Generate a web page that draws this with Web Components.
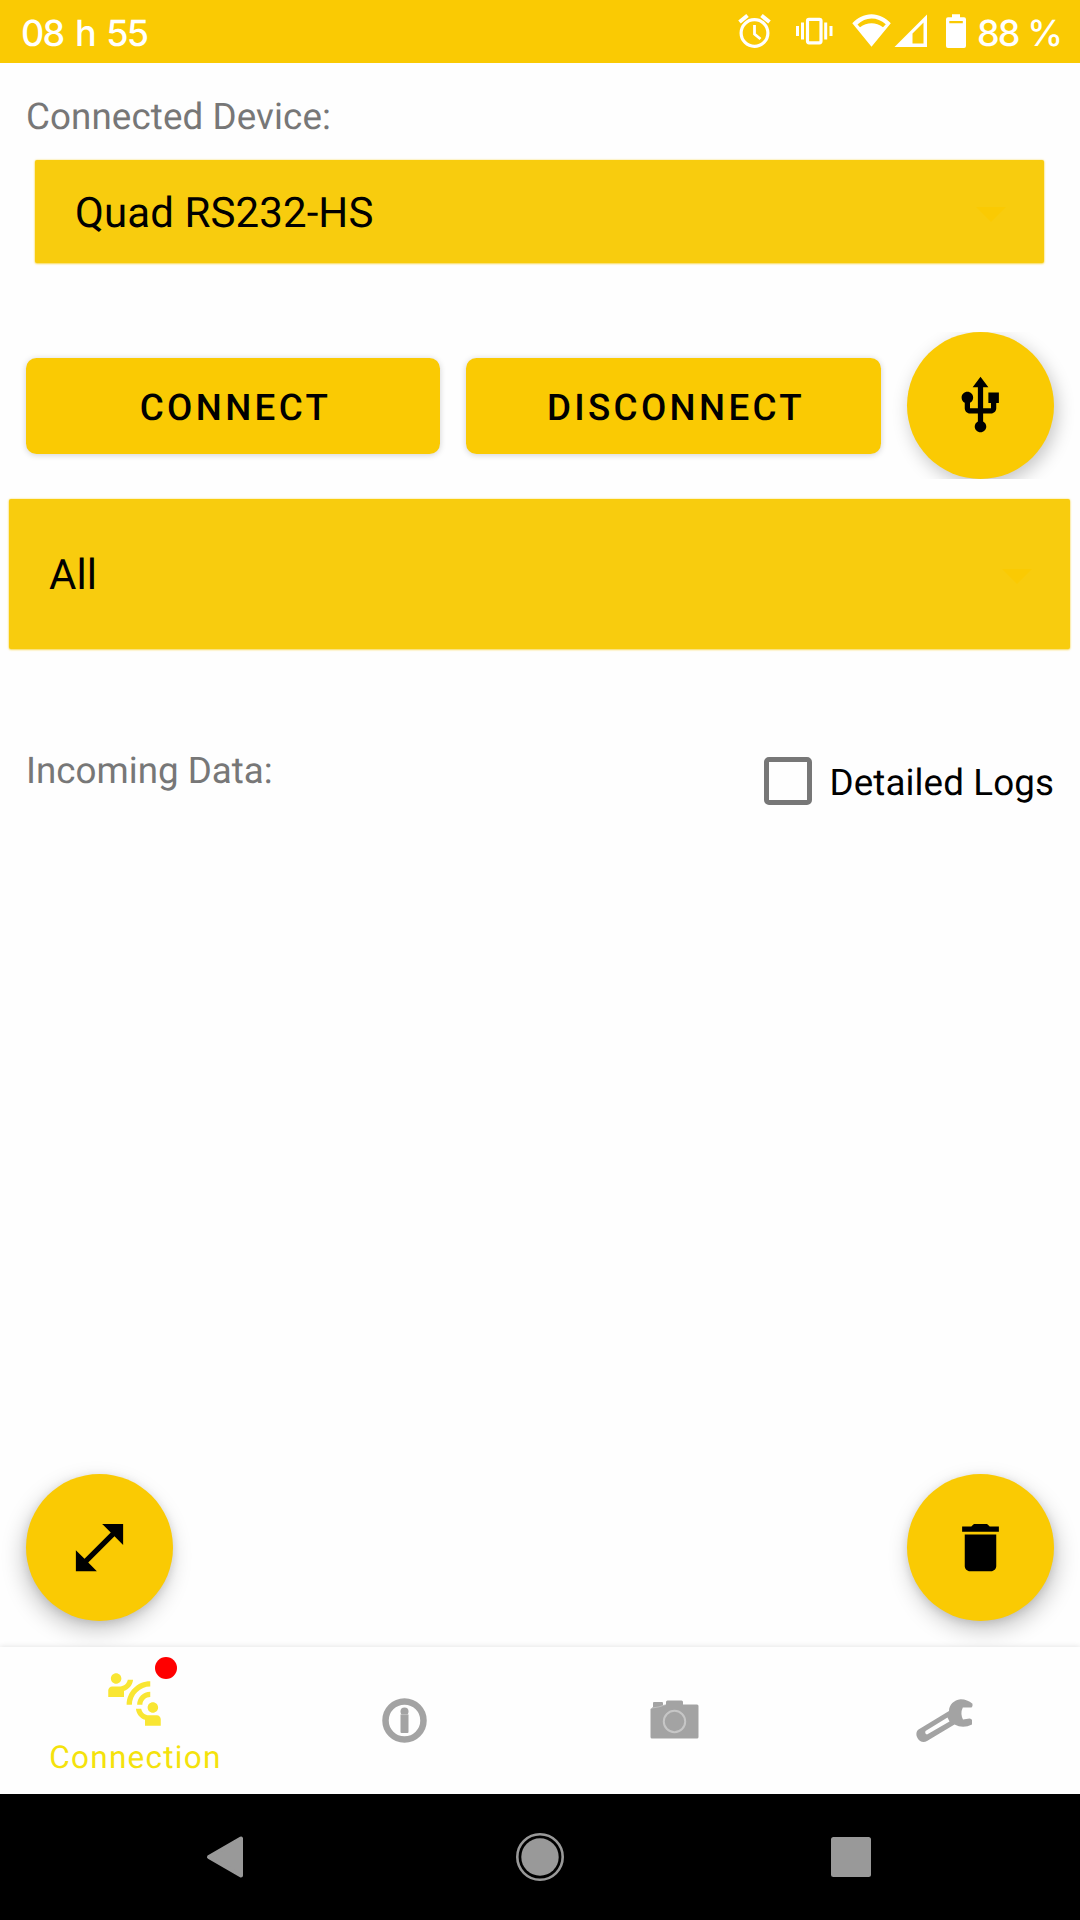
<!DOCTYPE html>
<html lang="en">
<head>
<meta charset="utf-8">
<title>Connection</title>
<style>
html,body{margin:0;padding:0}
body{width:1080px;height:1920px;overflow:hidden;background:#fefefe;font-family:Roboto,"Noto Sans",sans-serif;text-rendering:geometricPrecision;--yellow:#faca03}
</style>
</head>
<body>
<phone-screen></phone-screen>
<script>
const define = (name, html) => {
  const t = document.createElement('template');
  t.innerHTML = html;
  customElements.define(name, class extends HTMLElement {
    constructor() {
      super();
      this.attachShadow({ mode: 'open' }).append(t.content.cloneNode(true));
    }
  });
};

define('status-bar', `
<style>
:host{display:flex;height:63px;box-sizing:border-box;background:var(--yellow);color:#fff;font:550 36px/63px Inter,Roboto,sans-serif;padding:0 22px 0 21px;justify-content:space-between}
.clock{letter-spacing:-1.700px;word-spacing:3.500px;padding-top:2px;height:61px}
.right{display:flex}
svg{display:block;width:240px;height:63px}
.pct{letter-spacing:-1.900px;word-spacing:1px;padding:2px 0 0 2px;height:61px;width:81px;white-space:nowrap}
</style>
<span class="clock">08 h 55</span>
<div class="right">
<svg viewBox="735 0 240 63" fill="none" stroke="#fff">
  <circle cx="754.5" cy="33" r="13.4" stroke-width="3.2"/>
  <path d="M739.5 22l8-6.500M769.500 22l-8-6.500" stroke-width="4"/>
  <path d="M754.500 25v9l6 5" stroke-width="2.800"/>
  <rect x="807.500" y="19.300" width="13.500" height="23.500" rx="1.500" stroke-width="3.200"/>
  <path d="M802.500 22.500v17M825.700 22.500v17M797.500 26v10M831 26v10" stroke-width="3"/>
  <path fill="#fff" stroke="none" fill-rule="evenodd" d="M871.500 46.800L852.300 23.200C857.500 18 864 14.300 871.500 14.300S885.500 18 890.800 23.200ZM857.500 24.500L860 27.300C863.500 24.500 867.500 23.300 871.500 23.300S879.500 24.500 883 27.300L885.800 24.200C881.500 20.500 876.500 18.500 871.500 18.500S861.500 20.500 857.500 24.500Z"/>
  <path fill="#fff" stroke="none" fill-rule="evenodd" d="M894.500 47L927 14.500V47ZM912.500 43.500H923.500V22.500L912.500 33.500Z"/>
  <path fill="#fff" stroke="none" fill-rule="evenodd" d="M952 14.300h8v3h4q2 0 2 2V46q0 2-2 2H948q-2 0-2-2V19.300q0-2 2-2h4ZM949.300 21v2.200h13.500V21Z"/>
</svg>
<span class="pct">88 %</span>
</div>`);

define('select-box', `
<style>
:host{display:flex;box-sizing:border-box;align-items:center;justify-content:space-between;background:#f8cc0e;border-radius:2px;box-shadow:0 0 2px #f8cc0eb0,0 1px 2px #f8cc0e90;color:#000;font-size:42px;letter-spacing:.1px;line-height:50px;padding:4px 38px 0 40px}
svg{display:block;width:30px;height:16px;position:relative;top:1px}
</style>
<slot></slot>
<svg viewBox="0 0 30 16"><path d="M0 0H30L15 15Z" fill="#faca03"/></svg>`);

define('raised-button', `
<style>
:host{display:flex;flex:1;height:96px;align-items:center;justify-content:center;box-sizing:border-box;padding:3px 0 0 5px;background:var(--yellow);border-radius:10.500px;box-shadow:0 1px 6px #0000002e;color:#000;font-weight:500;font-size:36.750px;letter-spacing:3.330px}
</style><slot></slot>`);

define('round-button', `
<style>
:host{display:flex;width:147px;height:147px;flex:none}
:host([clipped]){clip-path:inset(0 -26px 0 -26px)}
div{width:147px;height:147px;border-radius:50%;background:var(--yellow);display:grid;place-items:center;box-shadow:var(--fab-shift,0px) 9px 22px #00000038,0 2px 8px #0000001c}
:host([clipped]) div{box-shadow:3px 6px 18px #0000003a}
svg,::slotted(svg){width:63px;height:63px;display:block}
</style><div><slot></slot></div>`);

define('check-option', `
<style>
:host{display:flex;align-items:center;color:#000;font-size:36.750px;line-height:48px}
i{display:block;box-sizing:border-box;width:48px;height:48px;border:5px solid #777;border-radius:5px;margin-right:18px}
span{position:relative;top:2px;letter-spacing:.1px}
</style><i></i><span><slot></slot></span>`);

define('tab-item', `
<style>
:host{display:flex;flex:1;flex-direction:column;align-items:center;justify-content:center;color:#f4e20c;font-size:31.500px;line-height:37px;letter-spacing:1.250px;padding-right:2px}
::slotted(svg){display:block;width:63px;height:63px}
</style><slot></slot>`);

define('tab-bar', `
<style>
:host{display:flex;height:147px;background:#fefefe;box-shadow:0 -1px 5px #00000018;position:relative}
.first{position:relative;justify-content:flex-start;padding-top:21px}
.label{padding:8px 0 0 3px;display:block}
.dot{position:absolute;left:155px;top:10px;width:22px;height:22px;border-radius:50%;background:#f00}
</style>
<tab-item class="first" style="flex:0 0 270px;box-sizing:border-box"><svg viewBox="0 0 24 24" fill="#f9e633"><path d="M11 14H9c0-4.970 4.030-9 9-9v2c-3.870 0-7 3.130-7 7zM18 11V9c-2.760 0-5 2.240-5 5h2c0-1.660 1.340-3 3-3zM7 4c0-1.110-.890-2-2-2s-2 .890-2 2 .890 2 2 2 2-.890 2-2zM11.450 4.500h-2C9.210 5.920 7.990 7 6.500 7h-3C2.670 7 2 7.670 2 8.500V11h6V8.740c1.860-.590 3.250-2.230 3.450-4.240zM19 17c1.110 0 2-.890 2-2s-.890-2-2-2-2 .890-2 2 .890 2 2 2zM20.500 18h-3c-1.490 0-2.710-1.080-2.950-2.500h-2c.200 2.010 1.590 3.650 3.450 4.240V22h6v-2.500c0-.830-.670-1.500-1.500-1.500z"/></svg><span class="label">Connection</span></tab-item>
<tab-item><svg viewBox="373 1689 63 63"><circle cx="404.500" cy="1720.500" r="19" fill="none" stroke="#a3a3a3" stroke-width="6.500"/><circle cx="404.500" cy="1711.500" r="4" fill="#a3a3a3"/><rect x="400.500" y="1714.500" width="8" height="18.500" rx="1" fill="#a3a3a3"/><path d="M400.500 1714.600h8" stroke="#c4c4c4" stroke-width=".8"/></svg></tab-item>
<tab-item><svg viewBox="643 1689 63 63"><path fill="#a3a3a3" d="M652 1708l1-1v-4q0-1 1-1h8q1 0 1 1v2h3v-3q0-1.500 1.500-1.500h14q1.500 0 1.500 1.500v2.500h14q1.500 0 1.500 1.500v31q0 1.500-1.500 1.500h-45q-1.500 0-1.500-1.500v-28z"/><circle cx="674.500" cy="1721.500" r="10.700" fill="none" stroke="#c6c6c6" stroke-width="2"/><path d="M652 1708q7-.5 14-3.500" fill="none" stroke="#c6c6c6" stroke-width=".8"/></svg></tab-item>
<tab-item><svg viewBox="913 1689 63 63"><path fill="#a3a3a3" fill-rule="evenodd" d="M972.500 1703.800Q967 1699 960.500 1699.200C954 1699.800 949 1705 949 1711L918.500 1729.500C916 1731.500 915.800 1735 917.500 1738C919.500 1741.800 923.500 1743 927 1741L954.500 1724.500Q963 1729 972 1724.500V1720Q971.500 1718.500 969.500 1718.500L963 1719.500Q960 1713.500 962.800 1707.500H971.500Q973 1707 972.500 1703.800ZM925.500 1731L947.500 1717.500L949.500 1721.500L927 1734.500Q924.500 1733.500 925.500 1731Z"/></svg></tab-item>
<span class="dot"></span>`);

define('system-nav', `
<style>
:host{display:flex;height:126px;background:#000;align-items:center;justify-content:space-between;padding:0 205px}
svg{display:block;width:48px;height:52px}
</style>
<svg viewBox="206 1831 48 52"><path d="M210 1857L242 1838.500V1875.500Z" fill="#999" stroke="#999" stroke-width="4" stroke-linejoin="round"/></svg>
<svg viewBox="516 1831 48 52"><circle cx="540" cy="1857" r="18.700" fill="#999"/><circle cx="540" cy="1857" r="22.700" fill="none" stroke="#999" stroke-width="2.600"/></svg>
<svg viewBox="827 1831 48 52"><rect x="831" y="1837" width="40" height="40" rx="2.500" fill="#999"/></svg>`);

define('phone-screen', `
<style>
:host{display:flex;flex-direction:column;width:1080px;height:1920px;background:#fefefe}
main{flex:1;display:flex;flex-direction:column;min-height:0}
.label{color:#777;font-size:36.750px;line-height:44px;margin-left:26px}
.device{height:103px;margin:15px 36px 0 35px;flex:none}
.channel{height:150px;margin:20px 10px 0 9px;flex:none}
.row{display:flex;gap:26px;align-items:center;margin:69px 26px 0}
.logs{display:flex;justify-content:space-between;margin:99px 26px 0 0}
.fabs{display:flex;justify-content:space-between;margin:auto 26px 26px}
</style>
<status-bar></status-bar>
<main>
<div class="label" style="margin-top:32px;height:50px;letter-spacing:.1px">Connected Device:</div>
<select-box class="device">Quad RS232-HS</select-box>
<div class="row">
<raised-button style="flex:0 0 414px">CONNECT</raised-button><raised-button>DISCONNECT</raised-button>
<round-button clipped><svg viewBox="0 0 24 24"><path d="M15 7v4h1v2h-3V5h2l-3-4-3 4h2v8H8v-2.070c.700-.370 1.200-1.080 1.200-1.930 0-1.210-.990-2.200-2.200-2.200-1.210 0-2.200.990-2.200 2.200 0 .850.500 1.560 1.200 1.930V13c0 1.110.890 2 2 2h3v3.050c-.710.370-1.200 1.100-1.200 1.950 0 1.220.990 2.200 2.200 2.200 1.210 0 2.200-.980 2.200-2.200 0-.850-.490-1.580-1.200-1.950V15h3c1.110 0 2-.890 2-2v-2h1V7h-4z"/></svg></round-button>
</div>
<select-box class="channel">All</select-box>
<div class="logs"><div class="label" style="padding-top:1px">Incoming Data:</div><check-option style="margin-top:9px">Detailed Logs</check-option></div>
<div class="fabs">
<round-button style="--fab-shift:-3px"><svg viewBox="0 0 24 24"><path d="M21 11V3h-8l3.290 3.290-10 10L3 13v8h8l-3.290-3.290 10-10z"/></svg></round-button>
<round-button style="--fab-shift:3px"><svg viewBox="0 0 24 24"><path d="M6 19c0 1.100.900 2 2 2h8c1.100 0 2-.900 2-2V7H6v12zM19 4h-3.500l-1-1h-5l-1 1H5v2h14V4z"/></svg></round-button>
</div>
</main>
<tab-bar></tab-bar>
<system-nav></system-nav>`);
</script>
</body>
</html>
